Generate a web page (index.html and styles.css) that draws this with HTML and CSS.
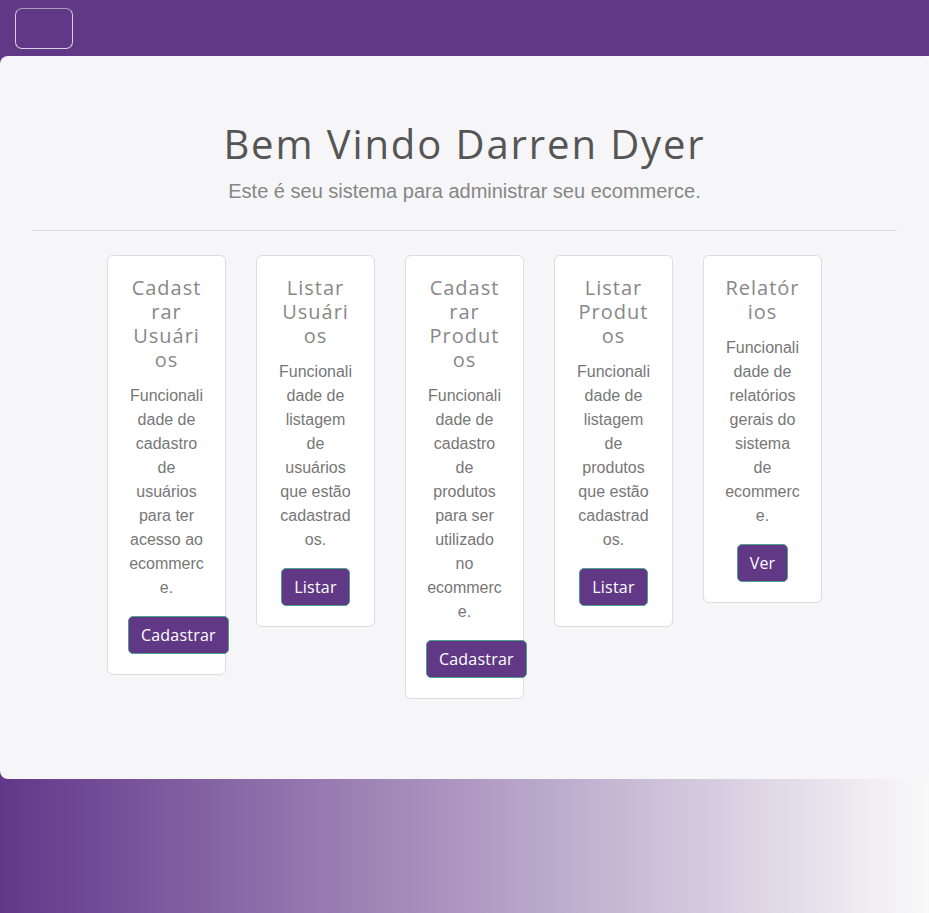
FILE: index.html
```html
<!DOCTYPE html>
<html lang="pt-BR">
<head>
<meta charset="utf-8">
<title>Admin</title>
<link rel="stylesheet" href="styles.css">
</head>
<body>
<nav class="navbar">
  <button class="toggler" type="button" aria-label="Menu"></button>
</nav>
<main class="panel">
  <h1 class="title">Bem Vindo Darren Dyer</h1>
  <p class="lead">Este é seu sistema para administrar seu ecommerce.</p>
  <hr class="divider">
  <div class="cards">
    <div class="card">
      <h5 class="card-title">Cadastrar Usuários</h5>
      <p class="card-text">Funcionalidade de cadastro de usuários para ter acesso ao ecommerce.</p>
      <a class="btn" href="#">Cadastrar</a>
    </div>
    <div class="card">
      <h5 class="card-title">Listar Usuários</h5>
      <p class="card-text">Funcionalidade de listagem de usuários que estão cadastrados.</p>
      <a class="btn" href="#">Listar</a>
    </div>
    <div class="card">
      <h5 class="card-title">Cadastrar Produtos</h5>
      <p class="card-text">Funcionalidade de cadastro de produtos para ser utilizado no ecommerce.</p>
      <a class="btn" href="#">Cadastrar</a>
    </div>
    <div class="card">
      <h5 class="card-title">Listar Produtos</h5>
      <p class="card-text">Funcionalidade de listagem de produtos que estão cadastrados.</p>
      <a class="btn" href="#">Listar</a>
    </div>
    <div class="card">
      <h5 class="card-title">Relatórios</h5>
      <p class="card-text">Funcionalidade de relatórios gerais do sistema de ecommerce.</p>
      <a class="btn" href="#">Ver</a>
    </div>
  </div>
</main>
</body>
</html>
```
FILE: styles.css
```css
html, body {
  margin: 0;
  padding: 0;
}
body {
  min-height: 100vh;
  background: linear-gradient(to right, #62378a 0%, #f9f9f9 100%);
  font-family: "Liberation Sans", Arial, sans-serif;
  font-size: 16px;
  line-height: 1.5;
  color: #777;
}
.navbar {
  background: #603885;
  height: 56px;
  box-sizing: border-box;
  padding: 8px 15px 7px;
  display: flex;
  align-items: flex-start;
}
.toggler {
  width: 58px;
  height: 41px;
  box-sizing: border-box;
  background: transparent;
  border: 1px solid rgba(235, 235, 240, 0.85);
  border-top-color: rgba(235, 235, 240, 0.55);
  border-radius: 7px;
  padding: 0;
}
.panel {
  display: block;
  background: #f6f6f8;
  border-radius: 8px;
  padding: 64px 32px 80px;
}
.title {
  margin: 0;
  text-align: center;
  font-family: "Open Sans", sans-serif;
  font-weight: 400;
  font-size: 40px;
  line-height: 48px;
  letter-spacing: 1.9px;
  color: #555;
}
.lead {
  margin: 8px 0 0;
  text-align: center;
  font-size: 20px;
  line-height: 30px;
  color: #868686;
}
.divider {
  border: 0;
  border-top: 1px solid #dcdcdf;
  margin: 24px 0 24px;
  height: 0;
}
.cards {
  display: flex;
  justify-content: center;
  align-items: flex-start;
  gap: 30px;
}
.card {
  width: 119px;
  box-sizing: border-box;
  background: #fff;
  border: 1px solid #dddde0;
  border-radius: 6px;
  padding: 20px;
  text-align: center;
}
.card-title {
  margin: 0 0 12px;
  font-family: "Open Sans", sans-serif;
  font-weight: 400;
  font-size: 20px;
  line-height: 24px;
  letter-spacing: 1px;
  color: #888;
  overflow-wrap: break-word;
}
.card-text {
  margin: 0 0 16px;
  font-size: 16px;
  line-height: 24px;
  color: #777;
  overflow-wrap: break-word;
}
.btn {
  display: inline-block;
  white-space: nowrap;
  font-family: "Open Sans", sans-serif;
  font-size: 16px;
  line-height: 24px;
  letter-spacing: 0.2px;
  padding: 6px 12px;
  color: #fff;
  background: #603885;
  border: 1px solid #4f9f8c;
  border-radius: 5px;
  text-decoration: none;
}
```
